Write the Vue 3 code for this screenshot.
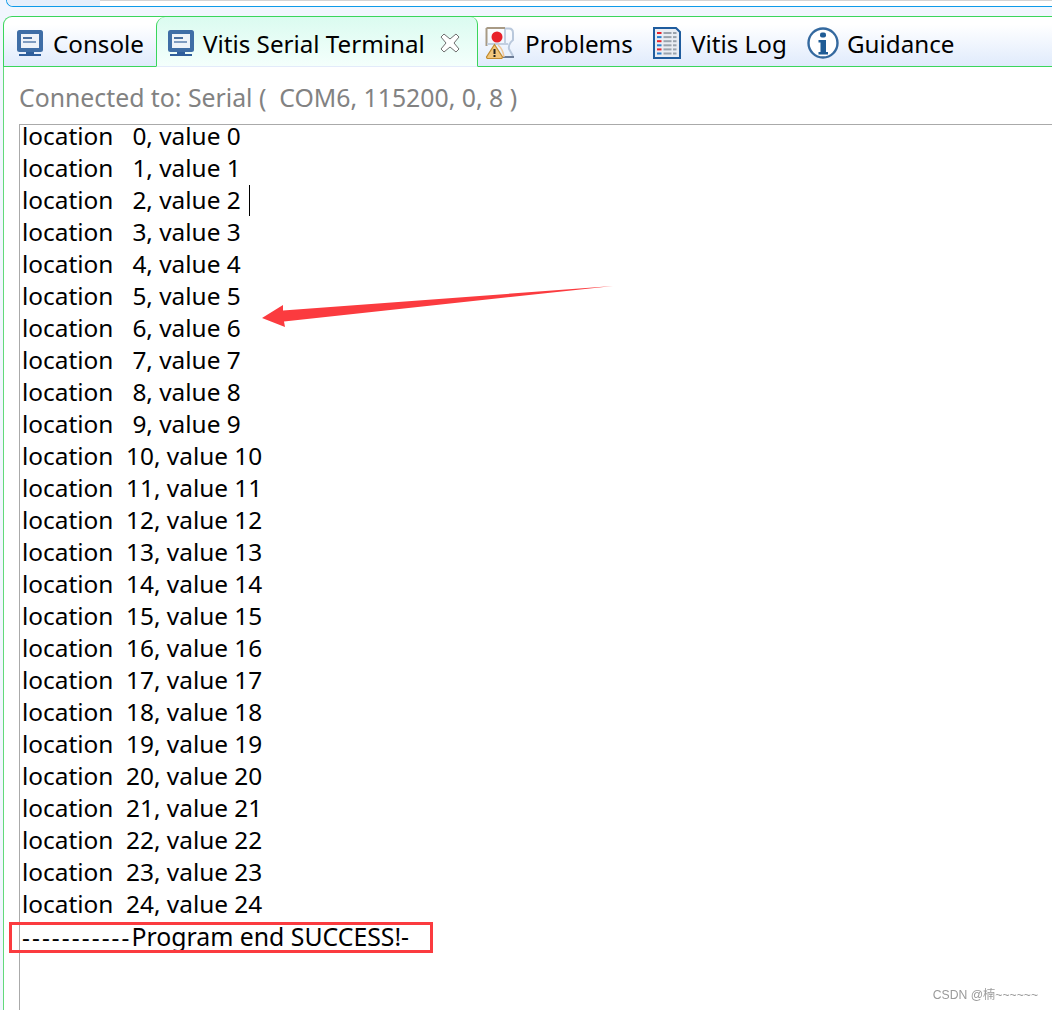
<script setup>
const rows = Array.from({ length: 25 }, (_, i) => ({
  id: i,
  text: `location ${String(i).padStart(3, ' ')}, value ${i}`
}))
const logRows = [0, 1, 2, 3, 4, 5].map((i) => ({
  id: i,
  y: 5 + i * 4.1,
  color: i % 2 === 0 ? '#e8212b' : '#2a7fd0'
}))
</script>

<template>
  <div class="page">
    <div class="topstrip">
      <div class="topstrip-left"></div>
      <div class="topstrip-right"></div>
    </div>
    <div class="head">
      <div class="tabbar">
        <div class="tab tab-console">
          <svg class="ico" width="26" height="26" viewBox="0 0 26 26">
            <rect x="0" y="0" width="26" height="22" rx="2.5" fill="#3f6ea6" />
            <rect x="4" y="4" width="18" height="14" fill="#eef3f9" />
            <rect x="6" y="7" width="9" height="2" fill="#4a6f9f" />
            <rect x="6" y="11" width="13" height="2" fill="#7f9cc0" />
            <rect x="9" y="22" width="8" height="2" fill="#2f5f9c" />
            <rect x="2" y="24" width="22" height="2" fill="#2f5f9c" />
          </svg>
          <span class="label">Console</span>
        </div>
        <div class="tab tab-active">
          <svg class="ico" width="26" height="26" viewBox="0 0 26 26">
            <rect x="0" y="0" width="26" height="22" rx="2.5" fill="#3f6ea6" />
            <rect x="4" y="4" width="18" height="14" fill="#eef3f9" />
            <rect x="6" y="7" width="9" height="2" fill="#4a6f9f" />
            <rect x="6" y="11" width="13" height="2" fill="#7f9cc0" />
            <rect x="9" y="22" width="8" height="2" fill="#2f5f9c" />
            <rect x="2" y="24" width="22" height="2" fill="#2f5f9c" />
          </svg>
          <span class="label">Vitis Serial Terminal</span>
          <svg class="close" width="20" height="20" viewBox="0 0 20 20">
            <path d="M4 1 L10 6 L16 1 L19 4 L14 10 L19 16 L16 19 L10 14 L4 19 L1 16 L6 10 L1 4 Z" fill="#fff" stroke="#6f6f6f" stroke-width="1" />
          </svg>
        </div>
        <div class="tab tab-problems">
          <svg class="ico" width="30" height="32" viewBox="0 0 30 32">
            <path d="M20 1.5 H24 Q28 1.5 28 6 V13 Q23 17 24 22 L28 29" fill="none" stroke="#b9c8dc" stroke-width="2" />
            <path d="M1.5 1 H20" fill="none" stroke="#a89a85" stroke-width="2" />
            <path d="M1.5 1 V19" fill="none" stroke="#a89a85" stroke-width="2" />
            <path d="M2 17 H23" fill="none" stroke="#c3cfe0" stroke-width="2" />
            <path d="M20 2 V16" fill="none" stroke="#c3cfe0" stroke-width="2" />
            <rect x="18" y="29" width="11" height="2" fill="#6c7c96" />
            <circle cx="12" cy="10" r="5.5" fill="#e8212b" />
            <path d="M13 18 Q18 22 19 30" fill="none" stroke="#f0c89a" stroke-width="1.6" />
            <path d="M9.5 17.5 L17.5 30 Q17.5 31.5 16 31.5 H3 Q1.5 31.5 1.5 30 Z" fill="#f3c77c" stroke="#c08a30" stroke-width="1.2" />
            <rect x="8.5" y="22" width="2" height="5" fill="#222" />
            <rect x="8.5" y="28" width="2" height="2" fill="#222" />
          </svg>
          <span class="label">Problems</span>
        </div>
        <div class="tab tab-log">
          <svg class="ico" width="28" height="32" viewBox="0 0 28 32">
            <path d="M1 1 H23 L27 5 V31 H1 Z" fill="#e9edf3" stroke="#1f5c9e" stroke-width="2" />
            <g v-for="r in logRows" :key="r.id">
              <rect x="4" :y="r.y" width="4.5" height="2" :fill="r.color" />
              <rect x="10.5" :y="r.y" width="8" height="2" fill="#9aa3ad" />
              <rect x="20" :y="r.y" width="3.5" height="2" fill="#9aa3ad" />
            </g>
          </svg>
          <span class="label">Vitis Log</span>
        </div>
        <div class="tab tab-guide">
          <svg class="ico" width="32" height="32" viewBox="0 0 32 32">
            <circle cx="16" cy="16" r="14.5" fill="#fff" stroke="#34699f" stroke-width="2.4" />
            <rect x="13" y="5.5" width="6" height="5" rx="2" fill="#1f5c96" />
            <path d="M11.5 13 H19 V25 H21 V27.5 H11.5 V25 H13.5 V15.5 H11.5 Z" fill="#1f5c96" />
          </svg>
          <span class="label">Guidance</span>
        </div>
        <div class="tab-rest"></div>
      </div>
    </div>
    <div class="panel">
      <div class="status">Connected to: Serial (&nbsp; COM6, 115200, 0, 8 )</div>
      <div class="terminal">
        <div class="lines">
          <div class="row" v-for="r in rows" :key="r.id">{{ r.text }}</div>
          <div class="row"><span class="dashes">-----------</span><span class="end">Program end SUCCESS!-</span></div>
        </div>
        <span class="caret"></span>
      </div>
      <div class="mark"></div>
      <svg class="arrow" width="352" height="42" viewBox="0 0 352 42">
        <path d="M0 32 L21 19 L21 24.5 L351 0 L22 35.5 L23 41 Z" fill="#fb3b3f" />
      </svg>
      <div class="watermark">CSDN @楠~~~~~~</div>
    </div>
  </div>
</template>

<style>
html, body { margin: 0; background: #fff; }
</style>

<style scoped>
.page {
  width: 1052px;
  height: 1010px;
  overflow: hidden;
  display: flex;
  flex-direction: column;
  font-family: "Noto Sans", "Noto Sans CJK SC", sans-serif;
  color: #000;
  background: #f1f6fe;
}
.topstrip {
  height: 6px;
  flex: none;
  display: flex;
  margin-left: 6px;
  border-left: 1px solid #0d9be8;
  border-bottom: 1px solid #0d9be8;
  border-bottom-left-radius: 7px;
  background: #fff;
  overflow: hidden;
}
.topstrip-left { width: 93px; background: #e6effb; }
.topstrip-right { flex: 1; background: linear-gradient(#d4d4d4 0, #d4d4d4 1px, #fff 1px); }
.head {
  flex: none;
  padding: 9px 0 0 3px;
  background: #f1f6fe;
}
.tabbar {
  height: 51px;
  display: flex;
  box-sizing: border-box;
  border-top: 1px solid #3ad65c;
  border-left: 1px solid #3ad65c;
  border-top-left-radius: 9px;
  background: linear-gradient(#fff, #fff 15%, #dfeafc);
  font-size: 24.2px;
  line-height: 34px;
  white-space: pre;
}
.tab {
  display: flex;
  align-items: center;
  height: 50px;
  box-sizing: border-box;
  padding-top: 2px;
  border-bottom: 1px solid #3ad65c;
  flex: none;
}
.label { padding-top: 2px; }
.ico { flex: none; display: block; }
.tab-console { width: 152px; padding-left: 13px; gap: 10px; }
.tab-active {
  width: 322px;
  padding-left: 11px;
  gap: 9px;
  border: 1px solid #3ad65c;
  border-bottom: 1px solid #e3ebfa;
  border-top: none;
  border-radius: 9px 7px 0 0;
  background: linear-gradient(#dbfbf0, #f4fffc);
}
.close { margin-left: 6px; flex: none; }
.tab-problems { padding-left: 7px; gap: 10px; width: 175px; }
.tab-log { gap: 10px; width: 154px; }
.tab-guide { gap: 8px; width: 170px; }
.tab-rest { flex: 1; border-bottom: 1px solid #3ad65c; }
.panel {
  flex: 1;
  position: relative;
  margin-left: 3px;
  border-left: 1px solid #62d97a;
  padding-left: 15px;
  background: #fff;
}
.status {
  height: 57px;
  box-sizing: border-box;
  padding-top: 14px;
  line-height: 32px;
  font-size: 24.8px;
  color: #828282;
  white-space: pre;
}
.terminal {
  position: relative;
  height: 886px;
  box-sizing: border-box;
  border-top: 1px solid #aaa;
  border-left: 1px solid #aaa;
  padding-left: 2px;
  font-size: 24.4px;
  line-height: 32px;
  white-space: pre;
}
.lines { margin-top: -5px; }
.row { height: 32px; }
.dashes { letter-spacing: 2.1px; }
.end { font-size: 24.8px; }
.caret {
  position: absolute;
  left: 229px;
  top: 60px;
  width: 1px;
  height: 31px;
  background: #000;
}
.mark {
  position: absolute;
  left: 5px;
  top: 855px;
  width: 424px;
  height: 31px;
  box-sizing: border-box;
  border: 3px solid #fb3b3f;
}
.arrow {
  position: absolute;
  left: 258px;
  top: 219px;
}
.watermark {
  position: absolute;
  right: 14px;
  bottom: 6px;
  font-size: 12.2px;
  line-height: 18px;
  color: #9a9a9a;
  font-family: "Liberation Sans", "Noto Sans CJK SC", sans-serif;
  filter: blur(0.3px);
}
</style>
